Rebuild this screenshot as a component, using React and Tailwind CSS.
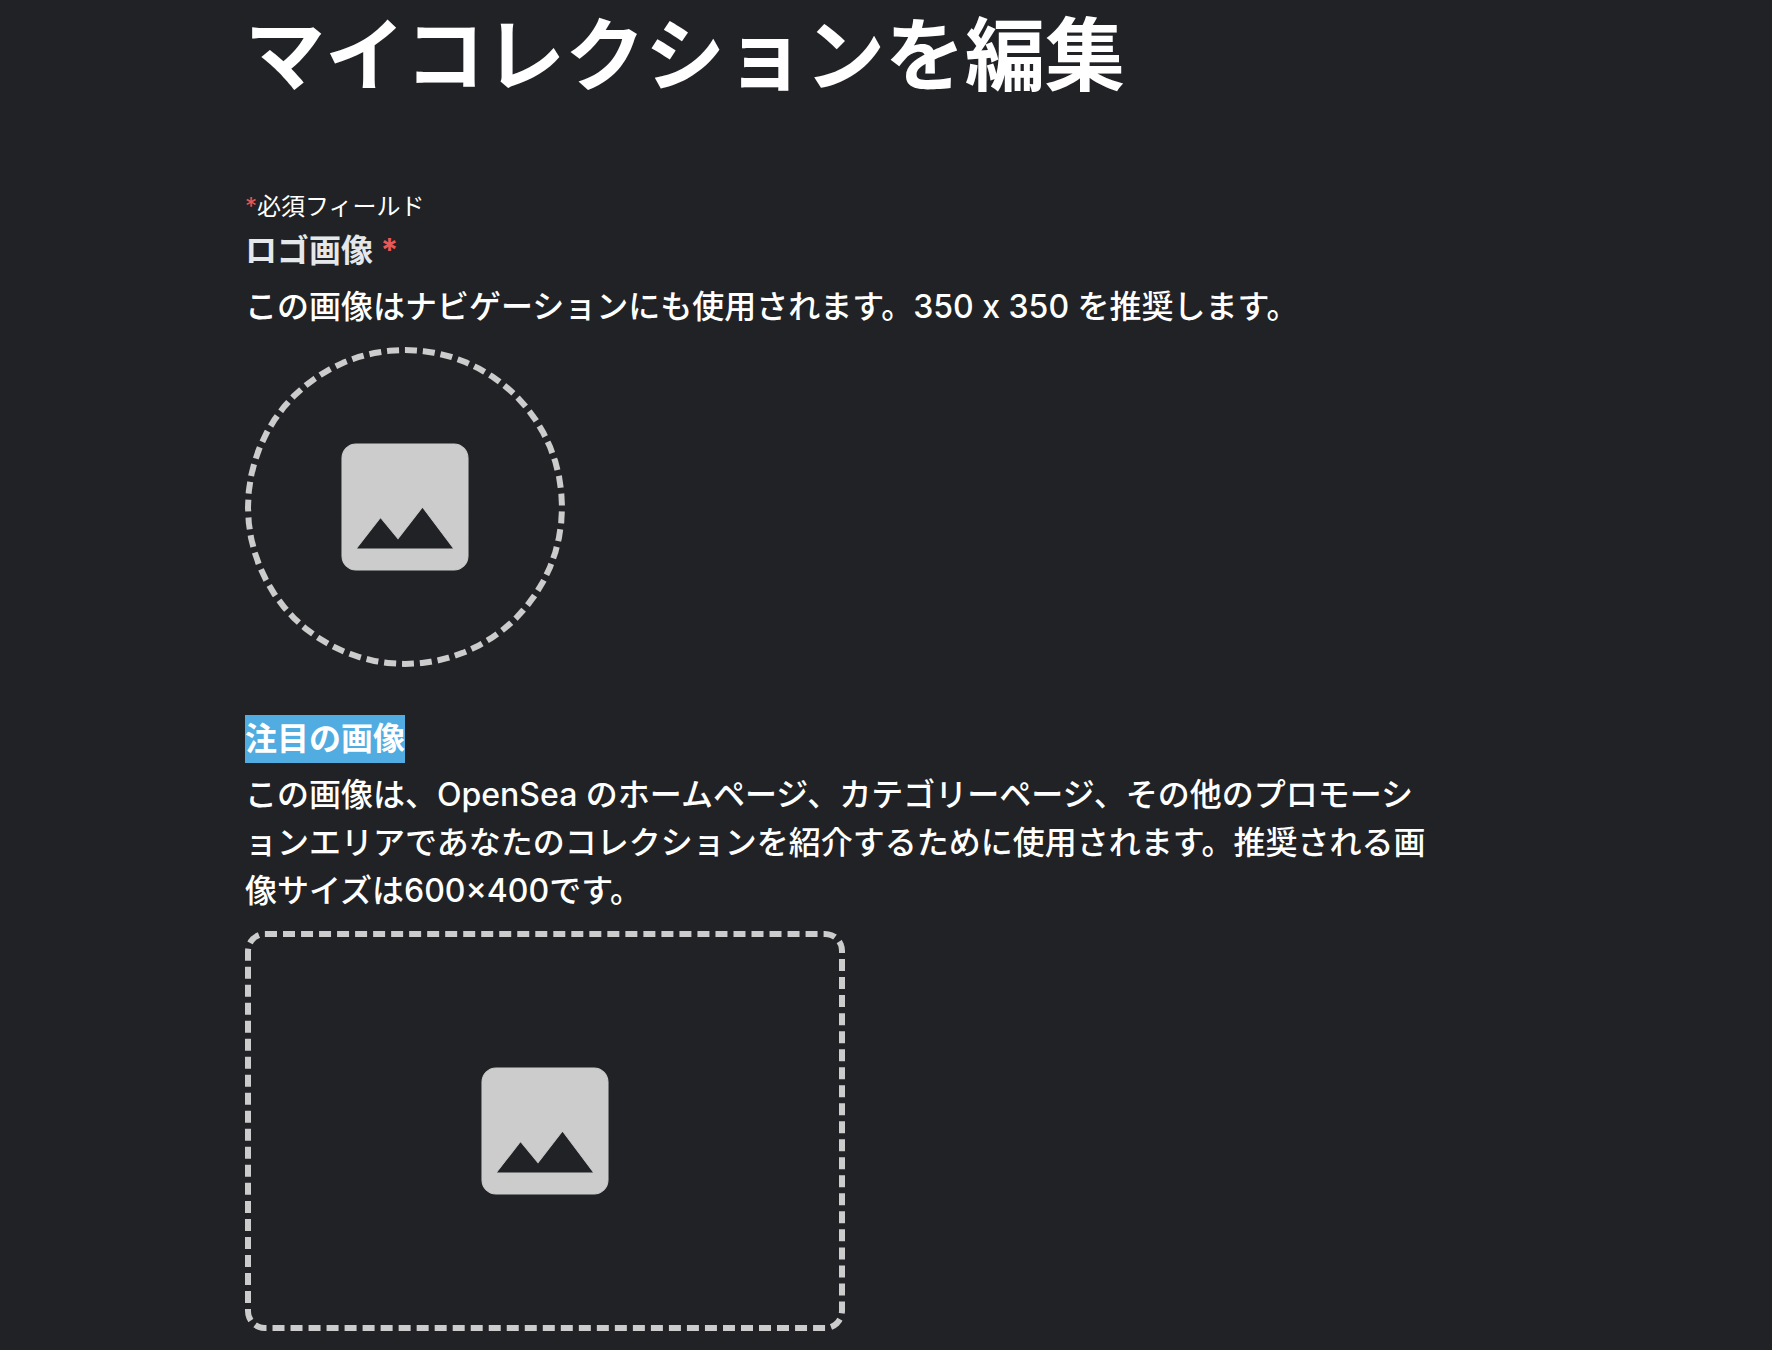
import React, { useState } from 'react';

const ImageIcon = () => (
  <svg
    viewBox="0 0 24 24"
    className="size-42 fill-[#cccccc] stroke-[#cccccc]"
    strokeWidth="0.15"
    aria-hidden="true"
  >
    <path d="M21 19V5c0-1.1-.9-2-2-2H5c-1.1 0-2 .9-2 2v14c0 1.1.9 2 2 2h14c1.1 0 2-.9 2-2zM8.500 13.500l2.500 3.010L14.500 12l4.500 6H5l3.500-4.500z" />
  </svg>
);

const DropZone = ({ id, className, required }) => {
  const [fileName, setFileName] = useState('');

  return (
    <label
      title={fileName}
      className={`relative mt-4 flex max-w-full cursor-pointer items-center justify-center border-6 border-dashed border-[#cccccc] ${className}`}
    >
      <input
        id={id}
        type="file"
        accept="image/*"
        required={required}
        aria-labelledby={`${id}-label`}
        aria-describedby={`${id}-help`}
        className="sr-only"
        onChange={(e) => setFileName(e.target.files[0]?.name || '')}
      />
      <ImageIcon />
    </label>
  );
};

const App = () => {
  return (
    <div
      lang="ja"
      className="min-h-screen bg-[#202225] font-['Inter','Noto_Sans_CJK_JP',sans-serif] text-[32px] leading-12 text-white"
    >
      <main className="mx-auto max-w-[1282px] pb-5">
        <h1 className="text-[80px] leading-[110px] font-bold">マイコレクションを編集</h1>

        <form className="mt-[77px] max-w-[1192px]">
          <p className="text-2xl leading-10">
            <span className="text-[#eb5757]">*</span>必須フィールド
          </p>

          <section>
            <label id="logo-label" htmlFor="logo" className="block font-bold text-[#e5e8eb]">
              ロゴ画像 <span className="text-[#eb5757]">*</span>
            </label>
            <p id="logo-help" className="mt-2 font-medium">
              この画像はナビゲーションにも使用されます。350 x 350 を推奨します。
            </p>
            <DropZone id="logo" required className="size-80 rounded-full" />
          </section>

          <section className="mt-12">
            <label id="featured-label" htmlFor="featured" className="block w-fit bg-[#51ace1] font-bold">
              注目の画像
            </label>
            <p id="featured-help" className="mt-2 font-medium">
              この画像は、OpenSea のホームページ、カテゴリーページ、その他のプロモーションエリアであなたのコレクションを紹介するために使用されます。推奨される画像サイズは600×400です。
            </p>
            <DropZone id="featured" className="h-100 w-150 rounded-[20px]" />
          </section>
        </form>
      </main>
    </div>
  );
};

export default App;
